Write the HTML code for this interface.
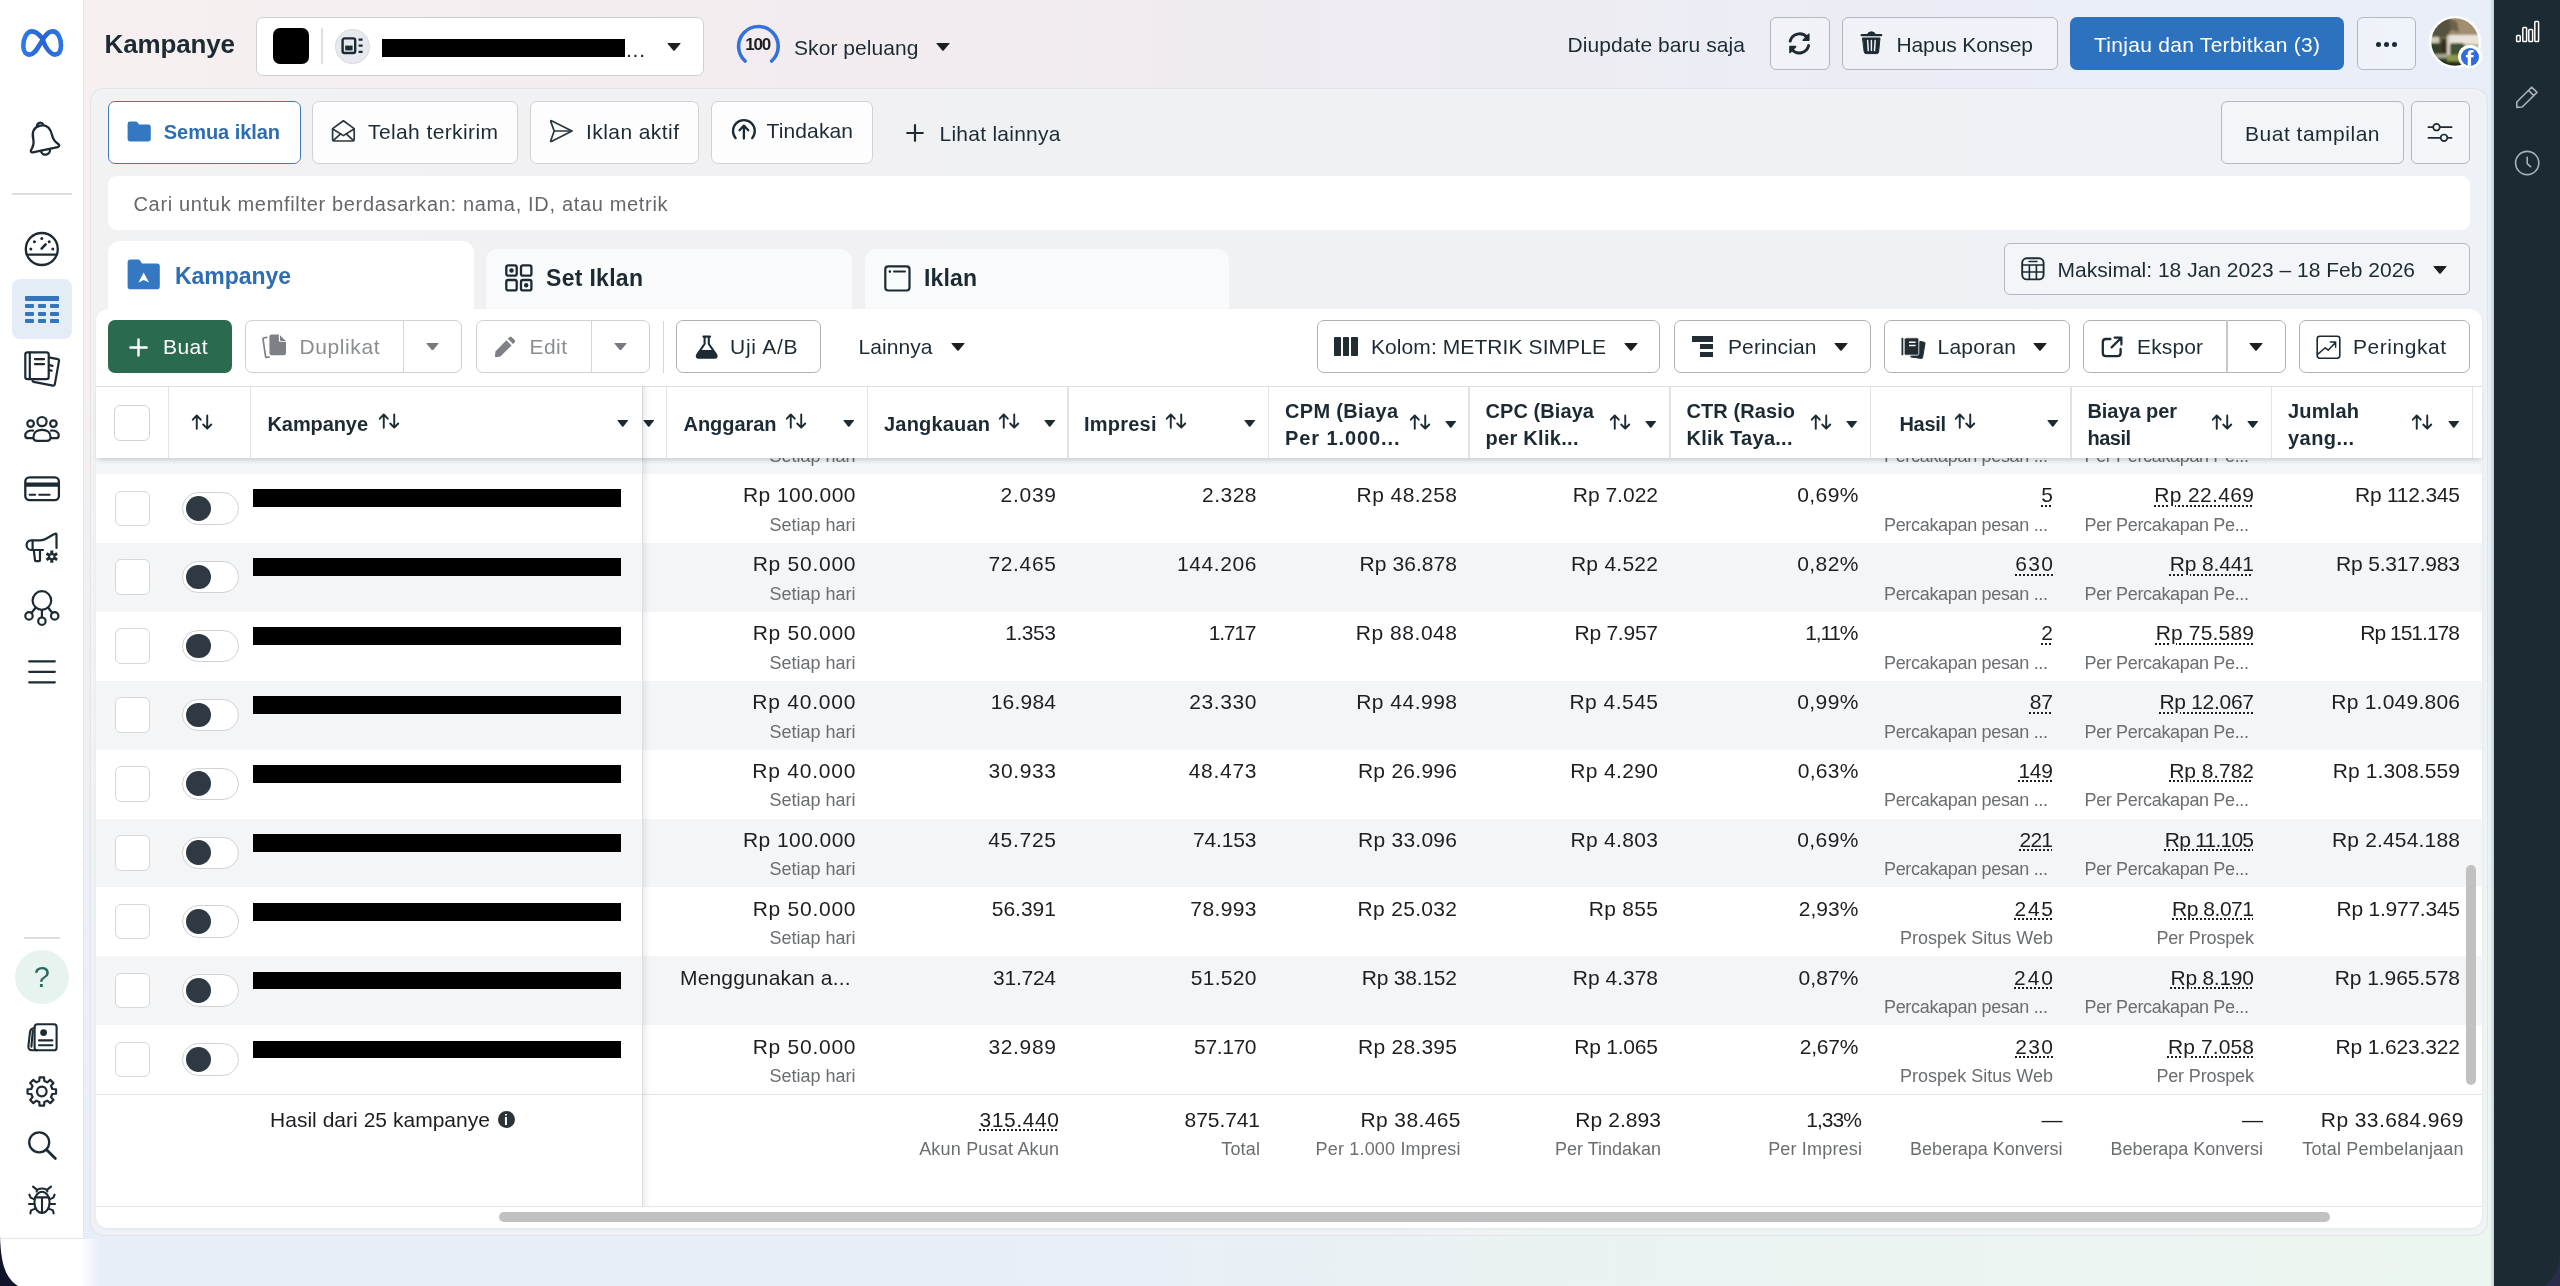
<!DOCTYPE html>
<html lang="id"><head><meta charset="utf-8"><title>Kampanye</title>
<style>
html,body{margin:0;padding:0;}
body{width:2560px;height:1286px;overflow:hidden;position:relative;font-family:"Liberation Sans",sans-serif;background:#eef1f6;}
.t{position:absolute;white-space:nowrap;}
div,svg,span{box-sizing:border-box;}
.btn{border:1.5px solid #b3b8c0;border-radius:6px;background:rgba(255,255,255,0.3);}
.btnt{border:1.5px solid #cfd2d7;border-radius:7px;background:rgba(255,255,255,0.82);}
.btnw{border:1.5px solid #cdd0d5;border-radius:7px;background:#fff;}
</style></head><body><div id="root" style="position:absolute;left:0;top:0;width:2560px;height:1286px;overflow:hidden;will-change:transform;">
<div style="position:absolute;left:0px;top:0px;width:2560px;height:1286px;background:linear-gradient(90deg,#f6f0f0 0%,#f3edf0 25%,#f0ebf1 48%,#ebedf5 72%,#e8eef8 100%);"></div>
<div style="position:absolute;left:0px;top:0px;width:2560px;height:1286px;background:linear-gradient(90deg,#e8eef8 0%,#e8eef8 38%,#eaf3f1 66%,#ecf6f0 100%);-webkit-mask-image:linear-gradient(180deg,rgba(0,0,0,0) 30%,#000 92%);mask-image:linear-gradient(180deg,rgba(0,0,0,0) 30%,#000 92%);"></div>
<div style="position:absolute;left:0px;top:0px;width:84px;height:1239px;background:#fff;border-right:1.5px solid #e3e5e9;border-bottom:1.5px solid #e3e5e9;"></div>
<div style="position:absolute;left:0px;top:1239px;width:100px;height:47px;background:linear-gradient(90deg,#fff 0%,#fff 80%,rgba(255,255,255,0) 100%);"></div>
<svg style="position:absolute;left:0px;top:1236px;" width="30" height="50" viewBox="0 0 30 50"><path d="M0 0 V50 H18 C6 42 1 30 0 0Z" fill="#12142b"/></svg>
<div style="position:absolute;left:12px;top:193px;width:60px;height:2px;background:#dadde1;"></div>
<div style="position:absolute;left:12px;top:279px;width:60px;height:60px;background:#e4ecf6;border-radius:8px;"></div>
<div style="position:absolute;left:24px;top:937px;width:36px;height:2px;background:#dadde1;"></div>
<div style="position:absolute;left:15px;top:950px;width:54px;height:54px;background:#e6f3ee;border-radius:50%;"></div>
<div style="position:absolute;left:2494px;top:0px;width:66px;height:1286px;background:#1c2b33;"></div>
<div style="position:absolute;left:2490px;top:0px;width:4px;height:1286px;background:linear-gradient(90deg,rgba(28,43,51,0),rgba(28,43,51,0.18));"></div>
<svg style="position:absolute;left:2540px;top:1254px;" width="20" height="32" viewBox="0 0 20 32"><path d="M20 0 V32 H3 C13 27 19 17 20 0Z" fill="#2a2d49"/></svg>
<span class="t" style="left:104.50px;top:27.29px;font-size:26px;line-height:34px;color:#1c2b33;font-weight:700;letter-spacing:-0.144px;">Kampanye</span>
<div class="btnw" style="position:absolute;left:255.5px;top:17px;width:448.0px;height:58.5px;"></div>
<div style="position:absolute;left:273px;top:28px;width:36px;height:36px;background:#000;border-radius:7px;"></div>
<div style="position:absolute;left:321px;top:28px;width:1.5px;height:36px;background:#dcdfe3;"></div>
<div style="position:absolute;left:335px;top:28.5px;width:35px;height:35.0px;background:#e6eaef;border-radius:50%;border:1px solid #d5dae0;"></div>
<div style="position:absolute;left:381.5px;top:38.5px;width:243.5px;height:18.5px;background:#000;"></div>
<span class="t" style="left:626.00px;top:36.22px;font-size:21px;line-height:27px;color:#1c1e21;letter-spacing:0.749px;">...</span>
<svg style="position:absolute;left:667.0px;top:42.5px;" width="14.0" height="8.0" viewBox="0 0 14 8"><path d="M0.6 0.8 Q0 0 1 0 H13 Q14 0 13.4 0.8 L7.7 7.5 Q7.0 8 6.3 7.5 Z" fill="#1c1e21"/></svg>
<svg style="position:absolute;left:735px;top:22px;" width="48" height="48" viewBox="0 0 48 48"><path d="M10.13 38.99 A19.8 19.8 0 1 1 36.67 38.99" fill="none" stroke="#3572d6" stroke-width="3.6" stroke-linecap="round"/></svg>
<span class="t" style="left:745.32px;top:33.91px;font-size:17px;line-height:22px;color:#1c1e21;font-weight:700;letter-spacing:-1.200px;">100</span>
<span class="t" style="left:794.00px;top:34.22px;font-size:21px;line-height:27px;color:#1c2b33;letter-spacing:0.067px;">Skor peluang</span>
<svg style="position:absolute;left:936.0px;top:42.5px;" width="14.0" height="8.0" viewBox="0 0 14 8"><path d="M0.6 0.8 Q0 0 1 0 H13 Q14 0 13.4 0.8 L7.7 7.5 Q7.0 8 6.3 7.5 Z" fill="#1c1e21"/></svg>
<span class="t" style="left:1567.50px;top:30.72px;font-size:21px;line-height:27px;color:#1c2b33;letter-spacing:0.071px;">Diupdate baru saja</span>
<div class="btn" style="position:absolute;left:1770px;top:16.5px;width:59.5px;height:53.5px;"></div>
<div class="btn" style="position:absolute;left:1841.5px;top:16.5px;width:216.0px;height:53.5px;"></div>
<span class="t" style="left:1896.50px;top:30.72px;font-size:21px;line-height:27px;color:#1c2b33;letter-spacing:-0.115px;">Hapus Konsep</span>
<div style="position:absolute;left:2070px;top:16.5px;width:274px;height:53.5px;background:#2d72be;border-radius:7px;"></div>
<span class="t" style="left:2094.00px;top:30.72px;font-size:21px;line-height:27px;color:#fff;letter-spacing:0.284px;">Tinjau dan Terbitkan (3)</span>
<div class="btn" style="position:absolute;left:2356.5px;top:16.5px;width:59.5px;height:53.5px;"></div>
<div style="position:absolute;left:2375.5px;top:41.5px;width:5.0px;height:5.0px;background:#1c2b33;border-radius:50%;"></div>
<div style="position:absolute;left:2383.5px;top:41.5px;width:5.0px;height:5.0px;background:#1c2b33;border-radius:50%;"></div>
<div style="position:absolute;left:2391.5px;top:41.5px;width:5.0px;height:5.0px;background:#1c2b33;border-radius:50%;"></div>
<div style="position:absolute;left:2429px;top:15.8px;width:52px;height:52.0px;border-radius:50%;background:rgba(255,255,255,0.95);box-shadow:0 0 2px rgba(255,255,255,0.9);"></div>
<svg style="position:absolute;left:2431px;top:18px" width="48" height="48" viewBox="-24 -24 48 48"><defs><clipPath id="avc"><circle r="23.7"/></clipPath><filter id="avb" x="-20%" y="-20%" width="140%" height="140%"><feGaussianBlur stdDeviation="1.1"/></filter></defs><g clip-path="url(#avc)"><g filter="url(#avb)"><rect x="-26" y="-26" width="52" height="52" fill="#6b6a4a"/><path d="M-14 -26 H26 V-6 H-10 Z" fill="#a08e6e"/><path d="M-26 -26 H-6 L-2 -14 L-8 -6 L-26 -2 Z" fill="#55533c"/><path d="M-6 -24 L2 -20 L4 -10 L-4 -12 Z" fill="#6d6048"/><rect x="-6" y="-7" width="32" height="9" fill="#e9e4da"/><rect x="-26" y="-5" width="10" height="6" fill="#cfcfb8"/><rect x="-26" y="1" width="18" height="26" fill="#36422b"/><rect x="-8" y="-6" width="3" height="19" fill="#d8d0c2"/><rect x="-13.5" y="-3" width="5" height="14" fill="#3b2a22"/><rect x="-5" y="2" width="31" height="24" fill="#4c5c33"/><rect x="-4" y="1" width="12" height="10" fill="#3f5236"/><rect x="10" y="2" width="16" height="8" fill="#b9b49a"/><rect x="-8" y="13" width="16" height="6" fill="#8a9a48"/><rect x="-20" y="12" width="12" height="4" fill="#a5a58c"/><path d="M-26 16 L-4 20 L14 21 L26 18 V26 H-26 Z" fill="#262c1c"/></g></g></svg>
<div style="position:absolute;left:2458.4px;top:45px;width:23.40000000000009px;height:23.400000000000006px;border-radius:50%;background:#fff;"></div>
<div style="position:absolute;left:2461px;top:47.6px;width:18.199999999999818px;height:18.199999999999996px;border-radius:50%;background:#2f6ae0;overflow:hidden;"><span class="t" style="left:4.6px;top:0.6px;font-size:24px;line-height:24px;font-weight:700;color:#fff;">f</span></div>
<div style="position:absolute;left:90px;top:88.2px;width:2397.5px;height:1148.3px;background:rgba(240,242,244,0.72);border:1.5px solid rgba(224,228,233,0.95);border-radius:14px;"></div>
<div style="position:absolute;left:107.5px;top:101px;width:193.0px;height:63px;background:#fff;border:1.8px solid #4279b8;border-radius:7px;"></div>
<span class="t" style="left:163.80px;top:119.07px;font-size:20px;line-height:26px;color:#2f6db3;font-weight:700;letter-spacing:-0.052px;">Semua iklan</span>
<div class="btnt" style="position:absolute;left:312px;top:101px;width:205.5px;height:63px;"></div>
<span class="t" style="left:368.00px;top:118.22px;font-size:21px;line-height:27px;color:#1c2b33;letter-spacing:0.395px;">Telah terkirim</span>
<div class="btnt" style="position:absolute;left:530px;top:101px;width:169px;height:63px;"></div>
<span class="t" style="left:586.00px;top:118.22px;font-size:21px;line-height:27px;color:#1c2b33;letter-spacing:0.429px;">Iklan aktif</span>
<div class="btnt" style="position:absolute;left:711px;top:101px;width:161.5px;height:63px;"></div>
<span class="t" style="left:766.50px;top:117.22px;font-size:21px;line-height:27px;color:#1c2b33;letter-spacing:0.127px;">Tindakan</span>
<span class="t" style="left:939.50px;top:119.72px;font-size:21px;line-height:27px;color:#1c2b33;letter-spacing:0.256px;">Lihat lainnya</span>
<div class="btn" style="position:absolute;left:2220.5px;top:101px;width:183.0px;height:63px;"></div>
<span class="t" style="left:2245.00px;top:119.72px;font-size:21px;line-height:27px;color:#1c2b33;letter-spacing:0.507px;">Buat tampilan</span>
<div class="btn" style="position:absolute;left:2410.5px;top:101px;width:59.0px;height:63px;"></div>
<div style="position:absolute;left:107.5px;top:176px;width:2362.5px;height:54px;background:#fff;border-radius:9px;"></div>
<span class="t" style="left:133.50px;top:190.57px;font-size:20px;line-height:26px;color:#65676b;letter-spacing:0.667px;">Cari untuk memfilter berdasarkan: nama, ID, atau metrik</span>
<div style="position:absolute;left:107.5px;top:241px;width:366.5px;height:79px;background:#fff;border-radius:12px 12px 0 0;"></div>
<div style="position:absolute;left:486px;top:249px;width:366px;height:71px;background:rgba(250,252,254,0.8);border-radius:12px 12px 0 0;"></div>
<div style="position:absolute;left:865px;top:249px;width:364px;height:71px;background:rgba(250,252,254,0.8);border-radius:12px 12px 0 0;"></div>
<span class="t" style="left:175.00px;top:260.53px;font-size:23px;line-height:30px;color:#2f6db3;font-weight:700;letter-spacing:-0.046px;">Kampanye</span>
<span class="t" style="left:546.00px;top:263.03px;font-size:23px;line-height:30px;color:#1c2b33;font-weight:700;letter-spacing:0.301px;">Set Iklan</span>
<span class="t" style="left:924.00px;top:263.03px;font-size:23px;line-height:30px;color:#1c2b33;font-weight:700;letter-spacing:0.147px;">Iklan</span>
<div class="btn" style="position:absolute;left:2003.5px;top:242.5px;width:466.0px;height:52.5px;"></div>
<span class="t" style="left:2057.50px;top:256.22px;font-size:21px;line-height:27px;color:#1c2b33;letter-spacing:0.008px;">Maksimal: 18 Jan 2023 – 18 Feb 2026</span>
<svg style="position:absolute;left:2433.0px;top:265.5px;" width="14.0" height="8.0" viewBox="0 0 14 8"><path d="M0.6 0.8 Q0 0 1 0 H13 Q14 0 13.4 0.8 L7.7 7.5 Q7.0 8 6.3 7.5 Z" fill="#1c1e21"/></svg>
<div style="position:absolute;left:96px;top:308.5px;width:2386px;height:919.0px;background:#fff;border-radius:12px;box-shadow:0 1px 3px rgba(0,0,0,0.06);"></div>
<div style="position:absolute;left:107.5px;top:300px;width:366.5px;height:12px;background:#fff;"></div>
<div style="position:absolute;left:108px;top:319.5px;width:124px;height:53.5px;background:#2a6a4f;border-radius:7px;"></div>
<span class="t" style="left:163.00px;top:333.22px;font-size:21px;line-height:27px;color:#fff;letter-spacing:0.433px;">Buat</span>
<div class="btnw" style="position:absolute;left:244.5px;top:320px;width:217.5px;height:53px;"></div>
<div style="position:absolute;left:402.5px;top:320px;width:1.5px;height:53px;background:#d3d6da;"></div>
<span class="t" style="left:299.50px;top:333.22px;font-size:21px;line-height:27px;color:#8a8d91;letter-spacing:0.590px;">Duplikat</span>
<svg style="position:absolute;left:426.0px;top:342.75px;" width="13.0" height="7.5" viewBox="0 0 13 7.5"><path d="M0.6 0.8 Q0 0 1 0 H12 Q13 0 12.4 0.8 L7.2 7.0 Q6.5 7.5 5.8 7.0 Z" fill="#76797d"/></svg>
<div class="btnw" style="position:absolute;left:475.5px;top:320px;width:174.0px;height:53px;"></div>
<div style="position:absolute;left:590.5px;top:320px;width:1.5px;height:53px;background:#d3d6da;"></div>
<span class="t" style="left:529.50px;top:333.22px;font-size:21px;line-height:27px;color:#8a8d91;letter-spacing:0.438px;">Edit</span>
<svg style="position:absolute;left:614.0px;top:342.75px;" width="13.0" height="7.5" viewBox="0 0 13 7.5"><path d="M0.6 0.8 Q0 0 1 0 H12 Q13 0 12.4 0.8 L7.2 7.0 Q6.5 7.5 5.8 7.0 Z" fill="#76797d"/></svg>
<div style="position:absolute;left:662.5px;top:320.5px;width:1.5px;height:52.5px;background:#d3d6da;"></div>
<div class="btnw" style="position:absolute;left:676px;top:320px;width:145px;height:53px;border-color:#adb1b7;"></div>
<span class="t" style="left:730.00px;top:333.22px;font-size:21px;line-height:27px;color:#1c2b33;letter-spacing:0.746px;">Uji A/B</span>
<span class="t" style="left:858.50px;top:333.22px;font-size:21px;line-height:27px;color:#1c2b33;letter-spacing:0.073px;">Lainnya</span>
<svg style="position:absolute;left:950.5px;top:342.5px;" width="14.0" height="8.0" viewBox="0 0 14 8"><path d="M0.6 0.8 Q0 0 1 0 H13 Q14 0 13.4 0.8 L7.7 7.5 Q7.0 8 6.3 7.5 Z" fill="#1c1e21"/></svg>
<div class="btnw" style="position:absolute;left:1316.5px;top:320px;width:343.5px;height:53px;border-color:#adb1b7;"></div>
<span class="t" style="left:1371.00px;top:333.22px;font-size:21px;line-height:27px;color:#1c2b33;letter-spacing:0.084px;">Kolom: METRIK SIMPLE</span>
<svg style="position:absolute;left:1624.0px;top:342.5px;" width="14.0" height="8.0" viewBox="0 0 14 8"><path d="M0.6 0.8 Q0 0 1 0 H13 Q14 0 13.4 0.8 L7.7 7.5 Q7.0 8 6.3 7.5 Z" fill="#1c1e21"/></svg>
<div class="btnw" style="position:absolute;left:1673.5px;top:320px;width:197.0px;height:53px;border-color:#adb1b7;"></div>
<span class="t" style="left:1728.00px;top:333.22px;font-size:21px;line-height:27px;color:#1c2b33;letter-spacing:0.118px;">Perincian</span>
<svg style="position:absolute;left:1834.0px;top:342.5px;" width="14.0" height="8.0" viewBox="0 0 14 8"><path d="M0.6 0.8 Q0 0 1 0 H13 Q14 0 13.4 0.8 L7.7 7.5 Q7.0 8 6.3 7.5 Z" fill="#1c1e21"/></svg>
<div class="btnw" style="position:absolute;left:1883.5px;top:320px;width:186.5px;height:53px;border-color:#adb1b7;"></div>
<span class="t" style="left:1937.50px;top:333.22px;font-size:21px;line-height:27px;color:#1c2b33;letter-spacing:0.238px;">Laporan</span>
<svg style="position:absolute;left:2033.0px;top:342.5px;" width="14.0" height="8.0" viewBox="0 0 14 8"><path d="M0.6 0.8 Q0 0 1 0 H13 Q14 0 13.4 0.8 L7.7 7.5 Q7.0 8 6.3 7.5 Z" fill="#1c1e21"/></svg>
<div class="btnw" style="position:absolute;left:2083px;top:320px;width:202.5px;height:53px;border-color:#adb1b7;"></div>
<div style="position:absolute;left:2226px;top:320px;width:1.5px;height:53px;background:#c4c8cd;"></div>
<span class="t" style="left:2137.00px;top:333.22px;font-size:21px;line-height:27px;color:#1c2b33;letter-spacing:0.128px;">Ekspor</span>
<svg style="position:absolute;left:2249.0px;top:342.5px;" width="14.0" height="8.0" viewBox="0 0 14 8"><path d="M0.6 0.8 Q0 0 1 0 H13 Q14 0 13.4 0.8 L7.7 7.5 Q7.0 8 6.3 7.5 Z" fill="#1c1e21"/></svg>
<div class="btnw" style="position:absolute;left:2298.5px;top:320px;width:171.0px;height:53px;border-color:#adb1b7;"></div>
<span class="t" style="left:2353.00px;top:333.22px;font-size:21px;line-height:27px;color:#1c2b33;letter-spacing:0.535px;">Peringkat</span>
<div style="position:absolute;left:96px;top:405.1px;width:2386px;height:68.89999999999998px;background:#f4f5f7;"></div>
<span class="t" style="left:769.44px;top:444.76px;font-size:18px;line-height:23px;color:#6a6d72;">Setiap hari</span>
<span class="t" style="left:1884.00px;top:444.76px;font-size:18px;line-height:23px;color:#6a6d72;letter-spacing:-0.322px;">Percakapan pesan ...</span>
<span class="t" style="left:2084.50px;top:444.76px;font-size:18px;line-height:23px;color:#6a6d72;letter-spacing:-0.348px;">Per Percakapan Pe...</span>
<div style="position:absolute;left:114.5px;top:490.5px;width:35.5px;height:35.5px;background:#fff;border:1.5px solid #d4d7dc;border-radius:6px;"></div>
<div style="position:absolute;left:182px;top:492.0px;width:56.5px;height:32.5px;background:#fff;border:1.5px solid #cfd3d8;border-radius:17px;"></div>
<div style="position:absolute;left:186px;top:495.8px;width:24.80000000000001px;height:24.80000000000001px;background:#2e3944;border-radius:50%;"></div>
<div style="position:absolute;left:253px;top:489.3px;width:367.5px;height:17.899999999999977px;background:#000;"></div>
<span class="t" style="left:743.01px;top:481.32px;font-size:21px;line-height:27px;color:#1c1e21;letter-spacing:0.433px;">Rp 100.000</span>
<span class="t" style="left:1000.61px;top:481.32px;font-size:21px;line-height:27px;color:#1c1e21;letter-spacing:0.709px;">2.039</span>
<span class="t" style="left:1201.96px;top:481.32px;font-size:21px;line-height:27px;color:#1c1e21;letter-spacing:0.497px;">2.328</span>
<span class="t" style="left:1356.61px;top:481.32px;font-size:21px;line-height:27px;color:#1c1e21;letter-spacing:0.435px;">Rp 48.258</span>
<span class="t" style="left:1572.77px;top:481.32px;font-size:21px;line-height:27px;color:#1c1e21;">Rp 7.022</span>
<span class="t" style="left:1797.16px;top:481.32px;font-size:21px;line-height:27px;color:#1c1e21;letter-spacing:0.449px;">0,69%</span>
<span class="t" style="left:2041.32px;top:481.32px;font-size:21px;line-height:27px;color:#1c1e21;text-decoration:underline dotted;text-decoration-thickness:2px;text-underline-offset:3px;">5</span>
<span class="t" style="left:2154.34px;top:481.32px;font-size:21px;line-height:27px;color:#1c1e21;letter-spacing:0.343px;text-decoration:underline dotted;text-decoration-thickness:2px;text-underline-offset:3px;">Rp 22.469</span>
<span class="t" style="left:2354.96px;top:481.32px;font-size:21px;line-height:27px;color:#1c1e21;letter-spacing:-0.221px;">Rp 112.345</span>
<span class="t" style="left:769.44px;top:513.86px;font-size:18px;line-height:23px;color:#6a6d72;">Setiap hari</span>
<span class="t" style="left:1884.00px;top:513.86px;font-size:18px;line-height:23px;color:#6a6d72;letter-spacing:-0.322px;">Percakapan pesan ...</span>
<span class="t" style="left:2084.50px;top:513.86px;font-size:18px;line-height:23px;color:#6a6d72;letter-spacing:-0.348px;">Per Percakapan Pe...</span>
<div style="position:absolute;left:96px;top:542.9px;width:2386px;height:68.89999999999998px;background:#f4f5f7;"></div>
<div style="position:absolute;left:114.5px;top:559.4px;width:35.5px;height:35.5px;background:#fff;border:1.5px solid #d4d7dc;border-radius:6px;"></div>
<div style="position:absolute;left:182px;top:560.9px;width:56.5px;height:32.5px;background:#fff;border:1.5px solid #cfd3d8;border-radius:17px;"></div>
<div style="position:absolute;left:186px;top:564.6999999999999px;width:24.80000000000001px;height:24.800000000000068px;background:#2e3944;border-radius:50%;"></div>
<div style="position:absolute;left:253px;top:558.1999999999999px;width:367.5px;height:17.90000000000009px;background:#000;"></div>
<span class="t" style="left:752.67px;top:550.22px;font-size:21px;line-height:27px;color:#1c1e21;letter-spacing:0.740px;">Rp 50.000</span>
<span class="t" style="left:988.45px;top:550.22px;font-size:21px;line-height:27px;color:#1c1e21;letter-spacing:0.664px;">72.465</span>
<span class="t" style="left:1176.93px;top:550.22px;font-size:21px;line-height:27px;color:#1c1e21;letter-spacing:0.610px;">144.206</span>
<span class="t" style="left:1359.59px;top:550.22px;font-size:21px;line-height:27px;color:#1c1e21;letter-spacing:0.062px;">Rp 36.878</span>
<span class="t" style="left:1570.92px;top:550.22px;font-size:21px;line-height:27px;color:#1c1e21;letter-spacing:0.264px;">Rp 4.522</span>
<span class="t" style="left:1797.22px;top:550.22px;font-size:21px;line-height:27px;color:#1c1e21;letter-spacing:0.434px;">0,82%</span>
<span class="t" style="left:2015.13px;top:550.22px;font-size:21px;line-height:27px;color:#1c1e21;letter-spacing:1.415px;text-decoration:underline dotted;text-decoration-thickness:2px;text-underline-offset:3px;">630</span>
<span class="t" style="left:2169.71px;top:550.22px;font-size:21px;line-height:27px;color:#1c1e21;letter-spacing:-0.135px;text-decoration:underline dotted;text-decoration-thickness:2px;text-underline-offset:3px;">Rp 8.441</span>
<span class="t" style="left:2336.07px;top:550.22px;font-size:21px;line-height:27px;color:#1c1e21;letter-spacing:-0.198px;">Rp 5.317.983</span>
<span class="t" style="left:769.44px;top:582.76px;font-size:18px;line-height:23px;color:#6a6d72;">Setiap hari</span>
<span class="t" style="left:1884.00px;top:582.76px;font-size:18px;line-height:23px;color:#6a6d72;letter-spacing:-0.322px;">Percakapan pesan ...</span>
<span class="t" style="left:2084.50px;top:582.76px;font-size:18px;line-height:23px;color:#6a6d72;letter-spacing:-0.348px;">Per Percakapan Pe...</span>
<div style="position:absolute;left:114.5px;top:628.3px;width:35.5px;height:35.5px;background:#fff;border:1.5px solid #d4d7dc;border-radius:6px;"></div>
<div style="position:absolute;left:182px;top:629.8px;width:56.5px;height:32.5px;background:#fff;border:1.5px solid #cfd3d8;border-radius:17px;"></div>
<div style="position:absolute;left:186px;top:633.5999999999999px;width:24.80000000000001px;height:24.800000000000068px;background:#2e3944;border-radius:50%;"></div>
<div style="position:absolute;left:253px;top:627.0999999999999px;width:367.5px;height:17.90000000000009px;background:#000;"></div>
<span class="t" style="left:752.67px;top:619.12px;font-size:21px;line-height:27px;color:#1c1e21;letter-spacing:0.740px;">Rp 50.000</span>
<span class="t" style="left:1005.17px;top:619.12px;font-size:21px;line-height:27px;color:#1c1e21;letter-spacing:-0.431px;">1.353</span>
<span class="t" style="left:1208.75px;top:619.12px;font-size:21px;line-height:27px;color:#1c1e21;letter-spacing:-1.200px;">1.717</span>
<span class="t" style="left:1355.80px;top:619.12px;font-size:21px;line-height:27px;color:#1c1e21;letter-spacing:0.536px;">Rp 88.048</span>
<span class="t" style="left:1574.53px;top:619.12px;font-size:21px;line-height:27px;color:#1c1e21;letter-spacing:-0.252px;">Rp 7.957</span>
<span class="t" style="left:1805.31px;top:619.12px;font-size:21px;line-height:27px;color:#1c1e21;letter-spacing:-1.200px;">1,11%</span>
<span class="t" style="left:2041.32px;top:619.12px;font-size:21px;line-height:27px;color:#1c1e21;text-decoration:underline dotted;text-decoration-thickness:2px;text-underline-offset:3px;">2</span>
<span class="t" style="left:2155.63px;top:619.12px;font-size:21px;line-height:27px;color:#1c1e21;letter-spacing:0.182px;text-decoration:underline dotted;text-decoration-thickness:2px;text-underline-offset:3px;">Rp 75.589</span>
<span class="t" style="left:2360.24px;top:619.12px;font-size:21px;line-height:27px;color:#1c1e21;letter-spacing:-0.981px;">Rp 151.178</span>
<span class="t" style="left:769.44px;top:651.66px;font-size:18px;line-height:23px;color:#6a6d72;">Setiap hari</span>
<span class="t" style="left:1884.00px;top:651.66px;font-size:18px;line-height:23px;color:#6a6d72;letter-spacing:-0.322px;">Percakapan pesan ...</span>
<span class="t" style="left:2084.50px;top:651.66px;font-size:18px;line-height:23px;color:#6a6d72;letter-spacing:-0.348px;">Per Percakapan Pe...</span>
<div style="position:absolute;left:96px;top:680.7px;width:2386px;height:68.89999999999998px;background:#f4f5f7;"></div>
<div style="position:absolute;left:114.5px;top:697.2px;width:35.5px;height:35.5px;background:#fff;border:1.5px solid #d4d7dc;border-radius:6px;"></div>
<div style="position:absolute;left:182px;top:698.7px;width:56.5px;height:32.5px;background:#fff;border:1.5px solid #cfd3d8;border-radius:17px;"></div>
<div style="position:absolute;left:186px;top:702.5px;width:24.80000000000001px;height:24.800000000000068px;background:#2e3944;border-radius:50%;"></div>
<div style="position:absolute;left:253px;top:696.0px;width:367.5px;height:17.90000000000009px;background:#000;"></div>
<span class="t" style="left:752.20px;top:688.02px;font-size:21px;line-height:27px;color:#1c1e21;letter-spacing:0.798px;">Rp 40.000</span>
<span class="t" style="left:990.65px;top:688.02px;font-size:21px;line-height:27px;color:#1c1e21;letter-spacing:0.224px;">16.984</span>
<span class="t" style="left:1189.23px;top:688.02px;font-size:21px;line-height:27px;color:#1c1e21;letter-spacing:0.608px;">23.330</span>
<span class="t" style="left:1356.14px;top:688.02px;font-size:21px;line-height:27px;color:#1c1e21;letter-spacing:0.493px;">Rp 44.998</span>
<span class="t" style="left:1569.47px;top:688.02px;font-size:21px;line-height:27px;color:#1c1e21;letter-spacing:0.471px;">Rp 4.545</span>
<span class="t" style="left:1797.22px;top:688.02px;font-size:21px;line-height:27px;color:#1c1e21;letter-spacing:0.434px;">0,99%</span>
<span class="t" style="left:2029.81px;top:688.02px;font-size:21px;line-height:27px;color:#1c1e21;letter-spacing:-0.169px;text-decoration:underline dotted;text-decoration-thickness:2px;text-underline-offset:3px;">87</span>
<span class="t" style="left:2159.41px;top:688.02px;font-size:21px;line-height:27px;color:#1c1e21;letter-spacing:-0.290px;text-decoration:underline dotted;text-decoration-thickness:2px;text-underline-offset:3px;">Rp 12.067</span>
<span class="t" style="left:2331.31px;top:688.02px;font-size:21px;line-height:27px;color:#1c1e21;letter-spacing:0.235px;">Rp 1.049.806</span>
<span class="t" style="left:769.44px;top:720.56px;font-size:18px;line-height:23px;color:#6a6d72;">Setiap hari</span>
<span class="t" style="left:1884.00px;top:720.56px;font-size:18px;line-height:23px;color:#6a6d72;letter-spacing:-0.322px;">Percakapan pesan ...</span>
<span class="t" style="left:2084.50px;top:720.56px;font-size:18px;line-height:23px;color:#6a6d72;letter-spacing:-0.348px;">Per Percakapan Pe...</span>
<div style="position:absolute;left:114.5px;top:766.1px;width:35.5px;height:35.5px;background:#fff;border:1.5px solid #d4d7dc;border-radius:6px;"></div>
<div style="position:absolute;left:182px;top:767.6px;width:56.5px;height:32.5px;background:#fff;border:1.5px solid #cfd3d8;border-radius:17px;"></div>
<div style="position:absolute;left:186px;top:771.4px;width:24.80000000000001px;height:24.800000000000068px;background:#2e3944;border-radius:50%;"></div>
<div style="position:absolute;left:253px;top:764.9px;width:367.5px;height:17.90000000000009px;background:#000;"></div>
<span class="t" style="left:752.20px;top:756.92px;font-size:21px;line-height:27px;color:#1c1e21;letter-spacing:0.798px;">Rp 40.000</span>
<span class="t" style="left:988.58px;top:756.92px;font-size:21px;line-height:27px;color:#1c1e21;letter-spacing:0.638px;">30.933</span>
<span class="t" style="left:1188.73px;top:756.92px;font-size:21px;line-height:27px;color:#1c1e21;letter-spacing:0.708px;">48.473</span>
<span class="t" style="left:1357.94px;top:756.92px;font-size:21px;line-height:27px;color:#1c1e21;letter-spacing:0.268px;">Rp 26.996</span>
<span class="t" style="left:1570.26px;top:756.92px;font-size:21px;line-height:27px;color:#1c1e21;letter-spacing:0.358px;">Rp 4.290</span>
<span class="t" style="left:1797.65px;top:756.92px;font-size:21px;line-height:27px;color:#1c1e21;letter-spacing:0.326px;">0,63%</span>
<span class="t" style="left:2018.45px;top:756.92px;font-size:21px;line-height:27px;color:#1c1e21;letter-spacing:-0.245px;text-decoration:underline dotted;text-decoration-thickness:2px;text-underline-offset:3px;">149</span>
<span class="t" style="left:2169.17px;top:756.92px;font-size:21px;line-height:27px;color:#1c1e21;letter-spacing:-0.057px;text-decoration:underline dotted;text-decoration-thickness:2px;text-underline-offset:3px;">Rp 8.782</span>
<span class="t" style="left:2332.84px;top:756.92px;font-size:21px;line-height:27px;color:#1c1e21;letter-spacing:0.096px;">Rp 1.308.559</span>
<span class="t" style="left:769.44px;top:789.46px;font-size:18px;line-height:23px;color:#6a6d72;">Setiap hari</span>
<span class="t" style="left:1884.00px;top:789.46px;font-size:18px;line-height:23px;color:#6a6d72;letter-spacing:-0.322px;">Percakapan pesan ...</span>
<span class="t" style="left:2084.50px;top:789.46px;font-size:18px;line-height:23px;color:#6a6d72;letter-spacing:-0.348px;">Per Percakapan Pe...</span>
<div style="position:absolute;left:96px;top:818.5px;width:2386px;height:68.89999999999998px;background:#f4f5f7;"></div>
<div style="position:absolute;left:114.5px;top:835.0px;width:35.5px;height:35.5px;background:#fff;border:1.5px solid #d4d7dc;border-radius:6px;"></div>
<div style="position:absolute;left:182px;top:836.5px;width:56.5px;height:32.5px;background:#fff;border:1.5px solid #cfd3d8;border-radius:17px;"></div>
<div style="position:absolute;left:186px;top:840.3px;width:24.80000000000001px;height:24.800000000000068px;background:#2e3944;border-radius:50%;"></div>
<div style="position:absolute;left:253px;top:833.8px;width:367.5px;height:17.90000000000009px;background:#000;"></div>
<span class="t" style="left:743.01px;top:825.82px;font-size:21px;line-height:27px;color:#1c1e21;letter-spacing:0.433px;">Rp 100.000</span>
<span class="t" style="left:988.17px;top:825.82px;font-size:21px;line-height:27px;color:#1c1e21;letter-spacing:0.720px;">45.725</span>
<span class="t" style="left:1193.06px;top:825.82px;font-size:21px;line-height:27px;color:#1c1e21;letter-spacing:-0.158px;">74.153</span>
<span class="t" style="left:1357.98px;top:825.82px;font-size:21px;line-height:27px;color:#1c1e21;letter-spacing:0.263px;">Rp 33.096</span>
<span class="t" style="left:1570.45px;top:825.82px;font-size:21px;line-height:27px;color:#1c1e21;letter-spacing:0.331px;">Rp 4.803</span>
<span class="t" style="left:1797.16px;top:825.82px;font-size:21px;line-height:27px;color:#1c1e21;letter-spacing:0.449px;">0,69%</span>
<span class="t" style="left:2019.56px;top:825.82px;font-size:21px;line-height:27px;color:#1c1e21;letter-spacing:-0.800px;text-decoration:underline dotted;text-decoration-thickness:2px;text-underline-offset:3px;">221</span>
<span class="t" style="left:2164.85px;top:825.82px;font-size:21px;line-height:27px;color:#1c1e21;letter-spacing:-0.775px;text-decoration:underline dotted;text-decoration-thickness:2px;text-underline-offset:3px;">Rp 11.105</span>
<span class="t" style="left:2331.92px;top:825.82px;font-size:21px;line-height:27px;color:#1c1e21;letter-spacing:0.180px;">Rp 2.454.188</span>
<span class="t" style="left:769.44px;top:858.36px;font-size:18px;line-height:23px;color:#6a6d72;">Setiap hari</span>
<span class="t" style="left:1884.00px;top:858.36px;font-size:18px;line-height:23px;color:#6a6d72;letter-spacing:-0.322px;">Percakapan pesan ...</span>
<span class="t" style="left:2084.50px;top:858.36px;font-size:18px;line-height:23px;color:#6a6d72;letter-spacing:-0.348px;">Per Percakapan Pe...</span>
<div style="position:absolute;left:114.5px;top:903.9000000000001px;width:35.5px;height:35.5px;background:#fff;border:1.5px solid #d4d7dc;border-radius:6px;"></div>
<div style="position:absolute;left:182px;top:905.4000000000001px;width:56.5px;height:32.5px;background:#fff;border:1.5px solid #cfd3d8;border-radius:17px;"></div>
<div style="position:absolute;left:186px;top:909.2px;width:24.80000000000001px;height:24.800000000000068px;background:#2e3944;border-radius:50%;"></div>
<div style="position:absolute;left:253px;top:902.7px;width:367.5px;height:17.90000000000009px;background:#000;"></div>
<span class="t" style="left:752.67px;top:894.72px;font-size:21px;line-height:27px;color:#1c1e21;letter-spacing:0.740px;">Rp 50.000</span>
<span class="t" style="left:991.76px;top:894.72px;font-size:21px;line-height:27px;color:#1c1e21;">56.391</span>
<span class="t" style="left:1190.35px;top:894.72px;font-size:21px;line-height:27px;color:#1c1e21;letter-spacing:0.384px;">78.993</span>
<span class="t" style="left:1357.51px;top:894.72px;font-size:21px;line-height:27px;color:#1c1e21;letter-spacing:0.322px;">Rp 25.032</span>
<span class="t" style="left:1588.67px;top:894.72px;font-size:21px;line-height:27px;color:#1c1e21;letter-spacing:0.322px;">Rp 855</span>
<span class="t" style="left:1798.71px;top:894.72px;font-size:21px;line-height:27px;color:#1c1e21;letter-spacing:0.061px;">2,93%</span>
<span class="t" style="left:2014.55px;top:894.72px;font-size:21px;line-height:27px;color:#1c1e21;letter-spacing:1.705px;text-decoration:underline dotted;text-decoration-thickness:2px;text-underline-offset:3px;">245</span>
<span class="t" style="left:2172.03px;top:894.72px;font-size:21px;line-height:27px;color:#1c1e21;letter-spacing:-0.466px;text-decoration:underline dotted;text-decoration-thickness:2px;text-underline-offset:3px;">Rp 8.071</span>
<span class="t" style="left:2336.47px;top:894.72px;font-size:21px;line-height:27px;color:#1c1e21;letter-spacing:-0.234px;">Rp 1.977.345</span>
<span class="t" style="left:769.44px;top:927.26px;font-size:18px;line-height:23px;color:#6a6d72;">Setiap hari</span>
<span class="t" style="left:1900.00px;top:927.26px;font-size:18px;line-height:23px;color:#6a6d72;letter-spacing:0.016px;">Prospek Situs Web</span>
<span class="t" style="left:2156.40px;top:927.26px;font-size:18px;line-height:23px;color:#6a6d72;letter-spacing:-0.145px;">Per Prospek</span>
<div style="position:absolute;left:96px;top:956.3000000000001px;width:2386px;height:68.89999999999998px;background:#f4f5f7;"></div>
<div style="position:absolute;left:114.5px;top:972.8000000000001px;width:35.5px;height:35.5px;background:#fff;border:1.5px solid #d4d7dc;border-radius:6px;"></div>
<div style="position:absolute;left:182px;top:974.3000000000001px;width:56.5px;height:32.5px;background:#fff;border:1.5px solid #cfd3d8;border-radius:17px;"></div>
<div style="position:absolute;left:186px;top:978.1px;width:24.80000000000001px;height:24.800000000000068px;background:#2e3944;border-radius:50%;"></div>
<div style="position:absolute;left:253px;top:971.6px;width:367.5px;height:17.90000000000009px;background:#000;"></div>
<span class="t" style="left:680.00px;top:963.62px;font-size:21px;line-height:27px;color:#1c1e21;letter-spacing:0.158px;">Menggunakan a...</span>
<span class="t" style="left:993.05px;top:963.62px;font-size:21px;line-height:27px;color:#1c1e21;letter-spacing:-0.256px;">31.724</span>
<span class="t" style="left:1190.79px;top:963.62px;font-size:21px;line-height:27px;color:#1c1e21;letter-spacing:0.296px;">51.520</span>
<span class="t" style="left:1361.77px;top:963.62px;font-size:21px;line-height:27px;color:#1c1e21;letter-spacing:-0.210px;">Rp 38.152</span>
<span class="t" style="left:1572.85px;top:963.62px;font-size:21px;line-height:27px;color:#1c1e21;letter-spacing:-0.012px;">Rp 4.378</span>
<span class="t" style="left:1798.62px;top:963.62px;font-size:21px;line-height:27px;color:#1c1e21;letter-spacing:0.084px;">0,87%</span>
<span class="t" style="left:2014.04px;top:963.62px;font-size:21px;line-height:27px;color:#1c1e21;letter-spacing:1.960px;text-decoration:underline dotted;text-decoration-thickness:2px;text-underline-offset:3px;">240</span>
<span class="t" style="left:2170.48px;top:963.62px;font-size:21px;line-height:27px;color:#1c1e21;letter-spacing:-0.245px;text-decoration:underline dotted;text-decoration-thickness:2px;text-underline-offset:3px;">Rp 8.190</span>
<span class="t" style="left:2334.69px;top:963.62px;font-size:21px;line-height:27px;color:#1c1e21;letter-spacing:-0.072px;">Rp 1.965.578</span>
<span class="t" style="left:1884.00px;top:996.16px;font-size:18px;line-height:23px;color:#6a6d72;letter-spacing:-0.322px;">Percakapan pesan ...</span>
<span class="t" style="left:2084.50px;top:996.16px;font-size:18px;line-height:23px;color:#6a6d72;letter-spacing:-0.348px;">Per Percakapan Pe...</span>
<div style="position:absolute;left:114.5px;top:1041.7px;width:35.5px;height:35.5px;background:#fff;border:1.5px solid #d4d7dc;border-radius:6px;"></div>
<div style="position:absolute;left:182px;top:1043.2px;width:56.5px;height:32.5px;background:#fff;border:1.5px solid #cfd3d8;border-radius:17px;"></div>
<div style="position:absolute;left:186px;top:1047.0px;width:24.80000000000001px;height:24.799999999999955px;background:#2e3944;border-radius:50%;"></div>
<div style="position:absolute;left:253px;top:1040.5px;width:367.5px;height:17.90000000000009px;background:#000;"></div>
<span class="t" style="left:752.67px;top:1032.52px;font-size:21px;line-height:27px;color:#1c1e21;letter-spacing:0.740px;">Rp 50.000</span>
<span class="t" style="left:988.45px;top:1032.52px;font-size:21px;line-height:27px;color:#1c1e21;letter-spacing:0.664px;">32.989</span>
<span class="t" style="left:1194.08px;top:1032.52px;font-size:21px;line-height:27px;color:#1c1e21;letter-spacing:-0.362px;">57.170</span>
<span class="t" style="left:1358.06px;top:1032.52px;font-size:21px;line-height:27px;color:#1c1e21;letter-spacing:0.253px;">Rp 28.395</span>
<span class="t" style="left:1574.23px;top:1032.52px;font-size:21px;line-height:27px;color:#1c1e21;letter-spacing:-0.209px;">Rp 1.065</span>
<span class="t" style="left:1799.71px;top:1032.52px;font-size:21px;line-height:27px;color:#1c1e21;letter-spacing:-0.189px;">2,67%</span>
<span class="t" style="left:2015.34px;top:1032.52px;font-size:21px;line-height:27px;color:#1c1e21;letter-spacing:1.310px;text-decoration:underline dotted;text-decoration-thickness:2px;text-underline-offset:3px;">230</span>
<span class="t" style="left:2167.98px;top:1032.52px;font-size:21px;line-height:27px;color:#1c1e21;letter-spacing:0.113px;text-decoration:underline dotted;text-decoration-thickness:2px;text-underline-offset:3px;">Rp 7.058</span>
<span class="t" style="left:2335.40px;top:1032.52px;font-size:21px;line-height:27px;color:#1c1e21;letter-spacing:-0.137px;">Rp 1.623.322</span>
<span class="t" style="left:769.44px;top:1065.06px;font-size:18px;line-height:23px;color:#6a6d72;">Setiap hari</span>
<span class="t" style="left:1900.00px;top:1065.06px;font-size:18px;line-height:23px;color:#6a6d72;letter-spacing:0.016px;">Prospek Situs Web</span>
<span class="t" style="left:2156.40px;top:1065.06px;font-size:18px;line-height:23px;color:#6a6d72;letter-spacing:-0.145px;">Per Prospek</span>
<div style="position:absolute;left:641.5px;top:386px;width:1.5px;height:820px;background:#dcdfe3;"></div>
<div style="position:absolute;left:643px;top:386px;width:7px;height:820px;background:linear-gradient(90deg,rgba(0,0,0,0.07),rgba(0,0,0,0));"></div>
<div style="position:absolute;left:2466px;top:865px;width:10px;height:219.5px;background:#c1c1c1;border-radius:5px;"></div>
<div style="position:absolute;left:96px;top:1094px;width:2386px;height:112.5px;background:#fff;border-top:1.5px solid #e1e4e8;border-bottom:1.5px solid #e1e4e8;"></div>
<div style="position:absolute;left:641.5px;top:1094px;width:1.5px;height:112px;background:#dcdfe3;"></div>
<div style="position:absolute;left:643px;top:1094px;width:7px;height:112px;background:linear-gradient(90deg,rgba(0,0,0,0.07),rgba(0,0,0,0));"></div>
<span class="t" style="left:270.00px;top:1105.72px;font-size:21px;line-height:27px;color:#1c1e21;letter-spacing:0.026px;">Hasil dari 25 kampanye</span>
<span class="t" style="left:979.49px;top:1105.72px;font-size:21px;line-height:27px;color:#1c1e21;letter-spacing:0.600px;text-decoration:underline dotted;text-decoration-thickness:2px;text-underline-offset:3px;">315.440</span>
<span class="t" style="left:919.16px;top:1138.26px;font-size:18px;line-height:23px;color:#6a6d72;letter-spacing:0.196px;">Akun Pusat Akun</span>
<span class="t" style="left:1184.61px;top:1105.72px;font-size:21px;line-height:27px;color:#1c1e21;letter-spacing:-0.087px;">875.741</span>
<span class="t" style="left:1221.21px;top:1138.26px;font-size:18px;line-height:23px;color:#6a6d72;letter-spacing:0.190px;">Total</span>
<span class="t" style="left:1360.54px;top:1105.72px;font-size:21px;line-height:27px;color:#1c1e21;letter-spacing:0.381px;">Rp 38.465</span>
<span class="t" style="left:1315.58px;top:1138.26px;font-size:18px;line-height:23px;color:#6a6d72;letter-spacing:0.178px;">Per 1.000 Impresi</span>
<span class="t" style="left:1575.26px;top:1105.72px;font-size:21px;line-height:27px;color:#1c1e21;letter-spacing:0.073px;">Rp 2.893</span>
<span class="t" style="left:1555.00px;top:1138.26px;font-size:18px;line-height:23px;color:#6a6d72;letter-spacing:-0.007px;">Per Tindakan</span>
<span class="t" style="left:1806.26px;top:1105.72px;font-size:21px;line-height:27px;color:#1c1e21;letter-spacing:-0.951px;">1,33%</span>
<span class="t" style="left:1768.13px;top:1138.26px;font-size:18px;line-height:23px;color:#6a6d72;letter-spacing:0.184px;">Per Impresi</span>
<span class="t" style="left:2041.50px;top:1105.72px;font-size:21px;line-height:27px;color:#1c1e21;">—</span>
<span class="t" style="left:1910.00px;top:1138.26px;font-size:18px;line-height:23px;color:#6a6d72;letter-spacing:-0.038px;">Beberapa Konversi</span>
<span class="t" style="left:2242.00px;top:1105.72px;font-size:21px;line-height:27px;color:#1c1e21;">—</span>
<span class="t" style="left:2110.50px;top:1138.26px;font-size:18px;line-height:23px;color:#6a6d72;letter-spacing:-0.038px;">Beberapa Konversi</span>
<span class="t" style="left:2320.86px;top:1105.72px;font-size:21px;line-height:27px;color:#1c1e21;letter-spacing:0.405px;">Rp 33.684.969</span>
<span class="t" style="left:2302.21px;top:1138.26px;font-size:18px;line-height:23px;color:#6a6d72;letter-spacing:0.186px;">Total Pembelanjaan</span>
<div style="position:absolute;left:498.5px;top:1212px;width:1831.5px;height:10px;background:#c1c1c1;border-radius:5px;"></div>
<div style="position:absolute;left:96px;top:386px;width:2386px;height:72px;background:#fff;border-top:1.5px solid #dcdfe3;box-shadow:0 4px 5px -2px rgba(0,0,0,0.18);"></div>
<div style="position:absolute;left:167.75px;top:386px;width:1.5px;height:72px;background:#dfe2e6;"></div>
<div style="position:absolute;left:249.75px;top:386px;width:1.5px;height:72px;background:#dfe2e6;"></div>
<div style="position:absolute;left:665.75px;top:386px;width:1.5px;height:72px;background:#dfe2e6;"></div>
<div style="position:absolute;left:866.75px;top:386px;width:1.5px;height:72px;background:#dfe2e6;"></div>
<div style="position:absolute;left:1067.25px;top:386px;width:1.5px;height:72px;background:#dfe2e6;"></div>
<div style="position:absolute;left:1267.75px;top:386px;width:1.5px;height:72px;background:#dfe2e6;"></div>
<div style="position:absolute;left:1468.25px;top:386px;width:1.5px;height:72px;background:#dfe2e6;"></div>
<div style="position:absolute;left:1669.25px;top:386px;width:1.5px;height:72px;background:#dfe2e6;"></div>
<div style="position:absolute;left:1869.75px;top:386px;width:1.5px;height:72px;background:#dfe2e6;"></div>
<div style="position:absolute;left:2070.25px;top:386px;width:1.5px;height:72px;background:#dfe2e6;"></div>
<div style="position:absolute;left:2270.75px;top:386px;width:1.5px;height:72px;background:#dfe2e6;"></div>
<div style="position:absolute;left:2471.75px;top:386px;width:1.5px;height:72px;background:#dfe2e6;"></div>
<div style="position:absolute;left:641.5px;top:386px;width:1.5px;height:72px;background:#d3d6da;"></div>
<div style="position:absolute;left:643px;top:386px;width:7px;height:72px;background:linear-gradient(90deg,rgba(0,0,0,0.07),rgba(0,0,0,0));"></div>
<div style="position:absolute;left:114px;top:405px;width:35.5px;height:35.5px;background:#fff;border:1.5px solid #d0d4d9;border-radius:6px;"></div>
<svg style="position:absolute;left:191px;top:413.9px;overflow:visible;" width="22" height="16.19999999999999" viewBox="0 0 22 17"><g fill="none" stroke="#1c2b33" stroke-width="2.0" stroke-linecap="round" stroke-linejoin="round"><path d="M5.5 15.5V1.8M1.3 6L5.5 1.6L9.7 6"/><path d="M16.5 1.5V15.2M12.3 11L16.5 15.4L20.7 11"/></g></svg>
<span class="t" style="left:267.50px;top:410.87px;font-size:20px;line-height:26px;color:#1c2b33;font-weight:700;letter-spacing:-0.093px;">Kampanye</span>
<svg style="position:absolute;left:377.5px;top:412.9px;overflow:visible;" width="22.0" height="16.19999999999999" viewBox="0 0 22 17"><g fill="none" stroke="#1c2b33" stroke-width="2.0" stroke-linecap="round" stroke-linejoin="round"><path d="M5.5 15.5V1.8M1.3 6L5.5 1.6L9.7 6"/><path d="M16.5 1.5V15.2M12.3 11L16.5 15.4L20.7 11"/></g></svg>
<svg style="position:absolute;left:616.75px;top:420.0px;" width="11.5" height="7.0" viewBox="0 0 11.5 7"><path d="M0.6 0.8 Q0 0 1 0 H10.5 Q11.5 0 10.9 0.8 L6.45 6.5 Q5.75 7 5.05 6.5 Z" fill="#1c2b33"/></svg>
<svg style="position:absolute;left:642.75px;top:420.0px;" width="11.5" height="7.0" viewBox="0 0 11.5 7"><path d="M0.6 0.8 Q0 0 1 0 H10.5 Q11.5 0 10.9 0.8 L6.45 6.5 Q5.75 7 5.05 6.5 Z" fill="#1c2b33"/></svg>
<span class="t" style="left:683.50px;top:410.87px;font-size:20px;line-height:26px;color:#1c2b33;font-weight:700;letter-spacing:-0.049px;">Anggaran</span>
<svg style="position:absolute;left:785px;top:412.9px;overflow:visible;" width="22" height="16.19999999999999" viewBox="0 0 22 17"><g fill="none" stroke="#1c2b33" stroke-width="2.0" stroke-linecap="round" stroke-linejoin="round"><path d="M5.5 15.5V1.8M1.3 6L5.5 1.6L9.7 6"/><path d="M16.5 1.5V15.2M12.3 11L16.5 15.4L20.7 11"/></g></svg>
<svg style="position:absolute;left:842.75px;top:420.0px;" width="11.5" height="7.0" viewBox="0 0 11.5 7"><path d="M0.6 0.8 Q0 0 1 0 H10.5 Q11.5 0 10.9 0.8 L6.45 6.5 Q5.75 7 5.05 6.5 Z" fill="#1c2b33"/></svg>
<span class="t" style="left:884.00px;top:410.87px;font-size:20px;line-height:26px;color:#1c2b33;font-weight:700;letter-spacing:0.190px;">Jangkauan</span>
<svg style="position:absolute;left:998px;top:412.9px;overflow:visible;" width="22" height="16.19999999999999" viewBox="0 0 22 17"><g fill="none" stroke="#1c2b33" stroke-width="2.0" stroke-linecap="round" stroke-linejoin="round"><path d="M5.5 15.5V1.8M1.3 6L5.5 1.6L9.7 6"/><path d="M16.5 1.5V15.2M12.3 11L16.5 15.4L20.7 11"/></g></svg>
<svg style="position:absolute;left:1043.75px;top:420.0px;" width="11.5" height="7.0" viewBox="0 0 11.5 7"><path d="M0.6 0.8 Q0 0 1 0 H10.5 Q11.5 0 10.9 0.8 L6.45 6.5 Q5.75 7 5.05 6.5 Z" fill="#1c2b33"/></svg>
<span class="t" style="left:1084.00px;top:410.87px;font-size:20px;line-height:26px;color:#1c2b33;font-weight:700;letter-spacing:0.226px;">Impresi</span>
<svg style="position:absolute;left:1164.5px;top:412.9px;overflow:visible;" width="22.0" height="16.19999999999999" viewBox="0 0 22 17"><g fill="none" stroke="#1c2b33" stroke-width="2.0" stroke-linecap="round" stroke-linejoin="round"><path d="M5.5 15.5V1.8M1.3 6L5.5 1.6L9.7 6"/><path d="M16.5 1.5V15.2M12.3 11L16.5 15.4L20.7 11"/></g></svg>
<svg style="position:absolute;left:1244.25px;top:420.0px;" width="11.5" height="7.0" viewBox="0 0 11.5 7"><path d="M0.6 0.8 Q0 0 1 0 H10.5 Q11.5 0 10.9 0.8 L6.45 6.5 Q5.75 7 5.05 6.5 Z" fill="#1c2b33"/></svg>
<span class="t" style="left:1285.00px;top:397.57px;font-size:20px;line-height:26px;color:#1c2b33;font-weight:700;letter-spacing:0.330px;">CPM (Biaya</span>
<span class="t" style="left:1285.00px;top:425.07px;font-size:20px;line-height:26px;color:#1c2b33;font-weight:700;letter-spacing:0.907px;">Per 1.000...</span>
<svg style="position:absolute;left:1408.5px;top:413.9px;overflow:visible;" width="22.0" height="16.19999999999999" viewBox="0 0 22 17"><g fill="none" stroke="#1c2b33" stroke-width="2.0" stroke-linecap="round" stroke-linejoin="round"><path d="M5.5 15.5V1.8M1.3 6L5.5 1.6L9.7 6"/><path d="M16.5 1.5V15.2M12.3 11L16.5 15.4L20.7 11"/></g></svg>
<svg style="position:absolute;left:1444.75px;top:420.5px;" width="11.5" height="7.0" viewBox="0 0 11.5 7"><path d="M0.6 0.8 Q0 0 1 0 H10.5 Q11.5 0 10.9 0.8 L6.45 6.5 Q5.75 7 5.05 6.5 Z" fill="#1c2b33"/></svg>
<span class="t" style="left:1485.50px;top:397.57px;font-size:20px;line-height:26px;color:#1c2b33;font-weight:700;letter-spacing:0.076px;">CPC (Biaya</span>
<span class="t" style="left:1485.50px;top:425.07px;font-size:20px;line-height:26px;color:#1c2b33;font-weight:700;letter-spacing:0.297px;">per Klik...</span>
<svg style="position:absolute;left:1609px;top:413.9px;overflow:visible;" width="22" height="16.19999999999999" viewBox="0 0 22 17"><g fill="none" stroke="#1c2b33" stroke-width="2.0" stroke-linecap="round" stroke-linejoin="round"><path d="M5.5 15.5V1.8M1.3 6L5.5 1.6L9.7 6"/><path d="M16.5 1.5V15.2M12.3 11L16.5 15.4L20.7 11"/></g></svg>
<svg style="position:absolute;left:1645.25px;top:420.5px;" width="11.5" height="7.0" viewBox="0 0 11.5 7"><path d="M0.6 0.8 Q0 0 1 0 H10.5 Q11.5 0 10.9 0.8 L6.45 6.5 Q5.75 7 5.05 6.5 Z" fill="#1c2b33"/></svg>
<span class="t" style="left:1686.50px;top:397.57px;font-size:20px;line-height:26px;color:#1c2b33;font-weight:700;letter-spacing:0.080px;">CTR (Rasio</span>
<span class="t" style="left:1686.50px;top:425.07px;font-size:20px;line-height:26px;color:#1c2b33;font-weight:700;letter-spacing:0.272px;">Klik Taya...</span>
<svg style="position:absolute;left:1810px;top:413.9px;overflow:visible;" width="22" height="16.19999999999999" viewBox="0 0 22 17"><g fill="none" stroke="#1c2b33" stroke-width="2.0" stroke-linecap="round" stroke-linejoin="round"><path d="M5.5 15.5V1.8M1.3 6L5.5 1.6L9.7 6"/><path d="M16.5 1.5V15.2M12.3 11L16.5 15.4L20.7 11"/></g></svg>
<svg style="position:absolute;left:1846.25px;top:420.5px;" width="11.5" height="7.0" viewBox="0 0 11.5 7"><path d="M0.6 0.8 Q0 0 1 0 H10.5 Q11.5 0 10.9 0.8 L6.45 6.5 Q5.75 7 5.05 6.5 Z" fill="#1c2b33"/></svg>
<span class="t" style="left:1899.50px;top:410.87px;font-size:20px;line-height:26px;color:#1c2b33;font-weight:700;letter-spacing:-0.326px;">Hasil</span>
<svg style="position:absolute;left:1953.5px;top:412.9px;overflow:visible;" width="22.0" height="16.19999999999999" viewBox="0 0 22 17"><g fill="none" stroke="#1c2b33" stroke-width="2.0" stroke-linecap="round" stroke-linejoin="round"><path d="M5.5 15.5V1.8M1.3 6L5.5 1.6L9.7 6"/><path d="M16.5 1.5V15.2M12.3 11L16.5 15.4L20.7 11"/></g></svg>
<svg style="position:absolute;left:2046.75px;top:420.0px;" width="11.5" height="7.0" viewBox="0 0 11.5 7"><path d="M0.6 0.8 Q0 0 1 0 H10.5 Q11.5 0 10.9 0.8 L6.45 6.5 Q5.75 7 5.05 6.5 Z" fill="#1c2b33"/></svg>
<span class="t" style="left:2087.50px;top:397.57px;font-size:20px;line-height:26px;color:#1c2b33;font-weight:700;letter-spacing:-0.069px;">Biaya per</span>
<span class="t" style="left:2087.50px;top:425.07px;font-size:20px;line-height:26px;color:#1c2b33;font-weight:700;letter-spacing:-0.519px;">hasil</span>
<svg style="position:absolute;left:2210.5px;top:413.9px;overflow:visible;" width="22.0" height="16.19999999999999" viewBox="0 0 22 17"><g fill="none" stroke="#1c2b33" stroke-width="2.0" stroke-linecap="round" stroke-linejoin="round"><path d="M5.5 15.5V1.8M1.3 6L5.5 1.6L9.7 6"/><path d="M16.5 1.5V15.2M12.3 11L16.5 15.4L20.7 11"/></g></svg>
<svg style="position:absolute;left:2247.25px;top:420.5px;" width="11.5" height="7.0" viewBox="0 0 11.5 7"><path d="M0.6 0.8 Q0 0 1 0 H10.5 Q11.5 0 10.9 0.8 L6.45 6.5 Q5.75 7 5.05 6.5 Z" fill="#1c2b33"/></svg>
<span class="t" style="left:2288.00px;top:397.57px;font-size:20px;line-height:26px;color:#1c2b33;font-weight:700;letter-spacing:0.196px;">Jumlah</span>
<span class="t" style="left:2288.00px;top:425.07px;font-size:20px;line-height:26px;color:#1c2b33;font-weight:700;letter-spacing:0.442px;">yang...</span>
<svg style="position:absolute;left:2411px;top:413.9px;overflow:visible;" width="22" height="16.19999999999999" viewBox="0 0 22 17"><g fill="none" stroke="#1c2b33" stroke-width="2.0" stroke-linecap="round" stroke-linejoin="round"><path d="M5.5 15.5V1.8M1.3 6L5.5 1.6L9.7 6"/><path d="M16.5 1.5V15.2M12.3 11L16.5 15.4L20.7 11"/></g></svg>
<svg style="position:absolute;left:2447.75px;top:420.5px;" width="11.5" height="7.0" viewBox="0 0 11.5 7"><path d="M0.6 0.8 Q0 0 1 0 H10.5 Q11.5 0 10.9 0.8 L6.45 6.5 Q5.75 7 5.05 6.5 Z" fill="#1c2b33"/></svg>
<svg style="position:absolute;left:21px;top:29.3px;overflow:visible;" width="42.3" height="27.999999999999996" viewBox="0 0 42.3 27.999999999999996" fill="none" stroke="#1c2b33" stroke-width="4.6" stroke-linecap="round" stroke-linejoin="round"><defs><linearGradient id="mg" x1="0" y1="0" x2="1" y2="0"><stop offset="0" stop-color="#2c7be8"/><stop offset="0.5" stop-color="#2b63d4"/><stop offset="1" stop-color="#2d74e2"/></linearGradient></defs><path d="M21.2 9.5 C17.5 4.5 14.5 2.4 11 2.4 C5.5 2.4 2.3 9.5 2.3 16.8 C2.3 22.2 4.6 25.6 8.6 25.6 C12.6 25.6 15 22 18.5 16 L23.8 7.6 C26.5 3.8 28.8 2.4 31.6 2.4 C36.8 2.4 40 9 40 16.6 C40 22.2 37.8 25.6 33.8 25.6 C30 25.6 27.6 22.6 24.4 17.2 Z" stroke="url(#mg)"/></svg>
<svg style="position:absolute;left:23px;top:119px;overflow:visible;" width="40" height="40" viewBox="0 0 40 40" fill="none" stroke="#1c2b33" stroke-width="2.3" stroke-linecap="round" stroke-linejoin="round"><g transform="translate(20.1 20.3) rotate(-12)"><path d="M0 -14 C-7.5 -14 -9.6 -8 -9.6 -2 C-9.6 3 -11.5 5.5 -14 8 C-15 9.2 -14.4 10.6 -12.8 10.6 H12.8 C14.4 10.6 15 9.2 14 8 C11.5 5.5 9.6 3 9.6 -2 C9.6 -8 7.5 -14 0 -14Z"/><path d="M-3.2 -14.4 A3.3 3.3 0 0 1 3.2 -14.4"/><path d="M-4.6 11 A4.6 4.6 0 0 0 4.6 11"/></g></svg>
<svg style="position:absolute;left:24px;top:231px;overflow:visible;" width="36" height="36" viewBox="0 0 36 36" fill="none" stroke="#1c2b33" stroke-width="2.3" stroke-linecap="round" stroke-linejoin="round"><circle cx="17.8" cy="18" r="16"/><path d="M2.6 23.6 H33"/><path d="M17.6 17.6 L21.6 13.4" stroke-width="2.6"/><g fill="#1c2b33" stroke="none"><circle cx="17.8" cy="7.6" r="1.5"/><circle cx="10.4" cy="10.8" r="1.5"/><circle cx="25.2" cy="10.8" r="1.5"/><circle cx="6.8" cy="18" r="1.5"/><circle cx="28.8" cy="18" r="1.5"/></g></svg>
<div style="position:absolute;left:24.8px;top:295.9px;width:34.099999999999994px;height:5.0px;background:#3575bd;border-radius:1px;"></div>
<div style="position:absolute;left:24.8px;top:304.2px;width:9.2px;height:3.8999999999999773px;background:#3575bd;border-radius:1px;"></div>
<div style="position:absolute;left:37.6px;top:304.2px;width:8.399999999999999px;height:3.8999999999999773px;background:#3575bd;border-radius:1px;"></div>
<div style="position:absolute;left:49.6px;top:304.2px;width:9.299999999999997px;height:3.8999999999999773px;background:#3575bd;border-radius:1px;"></div>
<div style="position:absolute;left:24.8px;top:311.7px;width:9.2px;height:3.8999999999999773px;background:#3575bd;border-radius:1px;"></div>
<div style="position:absolute;left:37.6px;top:311.7px;width:8.399999999999999px;height:3.8999999999999773px;background:#3575bd;border-radius:1px;"></div>
<div style="position:absolute;left:49.6px;top:311.7px;width:9.299999999999997px;height:3.8999999999999773px;background:#3575bd;border-radius:1px;"></div>
<div style="position:absolute;left:24.8px;top:319.3px;width:9.2px;height:3.8999999999999773px;background:#3575bd;border-radius:1px;"></div>
<div style="position:absolute;left:37.6px;top:319.3px;width:8.399999999999999px;height:3.8999999999999773px;background:#3575bd;border-radius:1px;"></div>
<div style="position:absolute;left:49.6px;top:319.3px;width:9.299999999999997px;height:3.8999999999999773px;background:#3575bd;border-radius:1px;"></div>
<svg style="position:absolute;left:24px;top:351px;overflow:visible;" width="36" height="36" viewBox="0 0 36 36" fill="none" stroke="#1c2b33" stroke-width="2.2" stroke-linecap="round" stroke-linejoin="round"><path d="M24.8 6.4 L33.8 8.2 Q35.3 8.5 35 10 L30.8 33.4 Q30.5 34.9 29 34.6 L9.6 30.9 Q8.4 30.6 8.6 29.4 L8.8 28.2"/><path d="M25.6 14.2 L28.6 14.8 M25 19.2 L27.6 19.7"/><rect x="1.3" y="1.3" width="23.4" height="26.8" rx="2.2" fill="#fff"/><path d="M5.8 1.6 V27.8"/><path d="M11 8.2 H20 M11 13.2 H20"/></svg>
<svg style="position:absolute;left:24px;top:415px;overflow:visible;" width="36" height="28" viewBox="0 0 36 28" fill="none" stroke="#1c2b33" stroke-width="2.2" stroke-linecap="round" stroke-linejoin="round"><circle cx="18" cy="6.6" r="4.6"/><circle cx="6.6" cy="8.6" r="3.3"/><circle cx="29.4" cy="8.6" r="3.3"/><path d="M9.4 22.2 C9.4 17.4 13 14.8 18 14.8 C23 14.8 26.6 17.4 26.6 22.2 C26.6 24.6 24.6 25.8 22.6 25.8 H13.4 C11.4 25.8 9.4 24.6 9.4 22.2Z"/><path d="M9 15.6 C4.6 15 1.2 17.4 1.2 20.4 C1.2 22.4 2.6 23.2 4.4 23.2 H9"/><path d="M27 15.6 C31.4 15 34.8 17.4 34.8 20.4 C34.8 22.4 33.4 23.2 31.6 23.2 H27"/></svg>
<svg style="position:absolute;left:24px;top:476px;overflow:visible;" width="36" height="26" viewBox="0 0 36 26" fill="none" stroke="#1c2b33" stroke-width="2.3" stroke-linecap="round" stroke-linejoin="round"><rect x="1.3" y="1.3" width="33.6" height="22.8" rx="4.2"/><path d="M1.5 8.6 H34.5" stroke-width="4.2" stroke-linecap="butt"/><path d="M5.6 18.8 H11.2 M15.2 18.8 H25.6" stroke-width="2"/></svg>
<svg style="position:absolute;left:25px;top:532px;overflow:visible;" width="34" height="31" viewBox="0 0 34 31" fill="none" stroke="#1c2b33" stroke-width="2.2" stroke-linecap="round" stroke-linejoin="round"><path d="M31.5 16 V2.6 Q31.5 1.4 30.2 1.8 C24 4.2 21 8.4 15 8.4 H6.2 C3.4 8.4 1.6 10.6 1.6 13.2 C1.6 15.8 3.4 18 6.2 18 H18"/><path d="M7.6 8.6 V18"/><path d="M8.8 18.4 L10 28.2 Q10.2 29.2 11.2 29.2 H14 Q15 29.2 15 28.2 V18.4"/><g transform="translate(26.8 24.6)"><circle r="3.6" fill="#1c2b33" stroke="none"/><path d="M0 -6.2V6.2 M5.37 -3.1L-5.37 3.1 M5.37 3.1L-5.37 -3.1" stroke-width="3" stroke-linecap="butt"/><circle r="1.7" fill="#fff" stroke="none"/></g></svg>
<svg style="position:absolute;left:22px;top:588px;overflow:visible;" width="40" height="40" viewBox="0 0 40 40" fill="none" stroke="#1c2b33" stroke-width="2.2" stroke-linecap="round" stroke-linejoin="round"><circle cx="19.9" cy="12.5" r="9.3"/><circle cx="7" cy="27.9" r="3.7"/><circle cx="19.9" cy="33.2" r="3.7"/><circle cx="32.7" cy="27.9" r="3.7"/><path d="M19.9 22 V29.2 M13.6 19.8 L9.6 24.8 M26.2 19.8 L30.2 24.8"/></svg>
<svg style="position:absolute;left:28px;top:658px;overflow:visible;" width="28" height="28" viewBox="0 0 28 28" fill="none" stroke="#1c2b33" stroke-width="2.3" stroke-linecap="round" stroke-linejoin="round"><path d="M1.2 3.3 H26.8 M1.2 13.8 H26.8 M1.2 24.3 H26.8"/></svg>
<span class="t" style="left:33.74px;top:957.95px;font-size:29px;line-height:38px;color:#2a6a5f;">?</span>
<svg style="position:absolute;left:27px;top:1023px;overflow:visible;" width="31" height="29" viewBox="0 0 31 29" fill="none" stroke="#1c2b33" stroke-width="2.1" stroke-linecap="round" stroke-linejoin="round"><rect x="7.6" y="1.3" width="22" height="26" rx="2.6"/><path d="M7.6 5 Q3.4 5.6 3 9 L1.4 23.4 Q1.2 27.2 5 27.3 H10"/><path d="M5.8 7.5 L4.4 23.6"/><circle cx="16.6" cy="9.6" r="3.4" fill="#1c2b33" stroke="none"/><path d="M12 17.4 H25.4 M12 22.2 H25.4"/></svg>
<svg style="position:absolute;left:26px;top:1076px;overflow:visible;" width="32" height="32" viewBox="0 0 32 32" fill="none" stroke="#1c2b33" stroke-width="2.2" stroke-linecap="round" stroke-linejoin="round"><path d="M13.55 1.28 L18.05 1.28 L18.32 5.00 L21.44 6.29 L24.26 3.85 L27.45 7.04 L25.01 9.86 L26.30 12.98 L30.02 13.25 L30.02 17.75 L26.30 18.02 L25.01 21.14 L27.45 23.96 L24.26 27.15 L21.44 24.71 L18.32 26.00 L18.05 29.72 L13.55 29.72 L13.28 26.00 L10.16 24.71 L7.34 27.15 L4.15 23.96 L6.59 21.14 L5.30 18.02 L1.58 17.75 L1.58 13.25 L5.30 12.98 L6.59 9.86 L4.15 7.04 L7.34 3.85 L10.16 6.29 L13.28 5.00Z"/><circle cx="15.8" cy="15.5" r="4.8"/></svg>
<svg style="position:absolute;left:27px;top:1130px;overflow:visible;" width="31" height="31" viewBox="0 0 31 31" fill="none" stroke="#1c2b33" stroke-width="2.3" stroke-linecap="round" stroke-linejoin="round"><circle cx="12.2" cy="12.3" r="10"/><path d="M19.6 19.8 L28.4 28.6" stroke-width="2.8"/></svg>
<svg style="position:absolute;left:27px;top:1184px;overflow:visible;" width="30" height="31" viewBox="0 0 30 31" fill="none" stroke="#1c2b33" stroke-width="2.1" stroke-linecap="round" stroke-linejoin="round"><ellipse cx="15" cy="18.4" rx="7.6" ry="10.6"/><path d="M8 13.4 H22 M15 13.6 V28.6"/><path d="M9.6 7.4 C10.6 3.6 19.4 3.6 20.4 7.4" /><path d="M6 2.6 L9.8 5.6 M24 2.6 L20.2 5.6"/><path d="M7.6 15.4 L3.6 13.6 L2.4 10.6 M22.4 15.4 L26.4 13.6 L27.6 10.6 M7.4 20 H2 M22.6 20 H28 M8.4 24.6 L4 26.4 L3.4 29.4 M21.6 24.6 L26 26.4 L26.6 29.4"/></svg>
<svg style="position:absolute;left:2515px;top:20px;overflow:visible;" width="25" height="23" viewBox="0 0 25 23" fill="none" stroke="#ffffff" stroke-width="1.5" stroke-linecap="round" stroke-linejoin="round"><rect x="1.6" y="15.4" width="3.6" height="6.2" rx="0.8"/><rect x="7.8" y="7.6" width="3.8" height="14" rx="0.8"/><rect x="13.8" y="9.6" width="3.8" height="12" rx="0.8"/><rect x="19.8" y="1.6" width="3.8" height="20" rx="0.8"/></svg>
<svg style="position:absolute;left:2515px;top:85px;overflow:visible;" width="25" height="24" viewBox="0 0 25 24" fill="none" stroke="#a7b2b9" stroke-width="1.6" stroke-linecap="round" stroke-linejoin="round"><path d="M16.6 2.2 L22 7.4 L7.2 22 L1.8 22.4 L1.8 17 Z M13.6 5.4 L18.8 10.6"/></svg>
<svg style="position:absolute;left:2514px;top:150px;overflow:visible;" width="27" height="27" viewBox="0 0 27 27" fill="none" stroke="#a7b2b9" stroke-width="1.6" stroke-linecap="round" stroke-linejoin="round"><circle cx="13.2" cy="13" r="11.6"/><path d="M13.2 7.2 V13.6 L16.6 16.6"/></svg>
<svg style="position:absolute;left:341px;top:36px;overflow:visible;" width="23" height="20" viewBox="0 0 23 20" fill="none" stroke="#1c2b33" stroke-width="2.2" stroke-linecap="round" stroke-linejoin="round"><rect x="1.6" y="2.4" width="12.6" height="14.6" rx="2" stroke-width="2.4"/><rect x="4.2" y="9.6" width="7.4" height="4.8" fill="#1c2b33" stroke="none"/><path d="M17.6 3.6 H21.6 M17.6 9.7 H21.6 M17.6 15.8 H21.6" stroke-width="2.2" stroke-linecap="butt"/></svg>
<svg style="position:absolute;left:1787px;top:31px;overflow:visible;" width="25" height="25" viewBox="0 0 25 25" fill="none" stroke="#1c2b33" stroke-width="2.9" stroke-linecap="round" stroke-linejoin="round"><path d="M3.2 10.2 A9.6 9.6 0 0 1 20 6.4" stroke-width="2.9"/><path d="M21.6 14.6 A9.6 9.6 0 0 1 4.8 18.4" stroke-width="2.9"/><path d="M21.8 3.4 V9.2 H16.2 Z M3 21.4 V15.6 H8.6 Z" fill="#1c2b33" stroke-width="1.6"/></svg>
<svg style="position:absolute;left:1860px;top:29.3px;overflow:visible;" width="23" height="25.499999999999996" viewBox="0 0 23 25.499999999999996" fill="none" stroke="#1c2b33" stroke-width="2" stroke-linecap="round" stroke-linejoin="round"><path d="M1.6 6.2 H21.2" stroke-width="2.2"/><path d="M7.4 5.4 C8 2 14.8 2 15.4 5.4 Z" fill="#1c2b33" stroke-width="1"/><path d="M2.8 9 H20 L18.6 23 Q18.4 24.6 16.8 24.6 H6 Q4.4 24.6 4.2 23 Z" fill="#1c2b33" stroke-width="1"/><path d="M7.6 11.4 L8.3 21.6 M11.4 11.4 V21.6 M15.2 11.4 L14.5 21.6" stroke="#eef1f6" stroke-width="1.5"/></svg>
<svg style="position:absolute;left:127px;top:120.5px;overflow:visible;" width="24.5" height="21.0" viewBox="0 0 24.5 21.0" fill="none" stroke="#1c2b33" stroke-width="0" stroke-linecap="round" stroke-linejoin="round"><path d="M0.6 3 Q0.6 0.6 3 0.6 H8.6 Q10 0.6 10.8 1.8 L12 3.6 H21.4 Q23.8 3.6 23.8 6 V18 Q23.8 20.4 21.4 20.4 H3 Q0.6 20.4 0.6 18 Z" fill="#3578c2" stroke="none"/></svg>
<svg style="position:absolute;left:331px;top:119px;overflow:visible;" width="25" height="24" viewBox="0 0 25 24" fill="none" stroke="#2a363d" stroke-width="1.7" stroke-linecap="round" stroke-linejoin="round"><path d="M1.6 9.6 L12.4 1.8 L23.2 9.6 V20.4 Q23.2 22 21.6 22 H3.2 Q1.6 22 1.6 20.4 Z"/><path d="M1.8 10 L12.4 16.6 L23 10"/><path d="M2.4 21.4 L9.6 14.8 M22.4 21.4 L15.2 14.8"/></svg>
<svg style="position:absolute;left:549px;top:119px;overflow:visible;" width="25" height="24" viewBox="0 0 25 24" fill="none" stroke="#2a363d" stroke-width="1.7" stroke-linecap="round" stroke-linejoin="round"><path d="M2.4 1.8 L23 12 L2.4 22.4 Q1.4 22.8 1.8 21.6 L5.2 12 L1.8 2.6 Q1.4 1.4 2.4 1.8Z"/><path d="M5.4 12 H22"/></svg>
<svg style="position:absolute;left:731px;top:119px;overflow:visible;" width="26" height="26" viewBox="0 0 26 26" fill="none" stroke="#1c2b33" stroke-width="2.3" stroke-linecap="round" stroke-linejoin="round"><path d="M4.67 19.15 A10.9 10.9 0 1 1 21.13 19.15"/><path d="M12.90 19.6 V6.8 M8.50 11.2 L12.90 6.6 L17.30 11.2"/></svg>
<svg style="position:absolute;left:906px;top:124px;overflow:visible;" width="18" height="18" viewBox="0 0 18 18" fill="none" stroke="#1c2b33" stroke-width="2.2" stroke-linecap="round" stroke-linejoin="round"><path d="M9 1.2 V16.8 M1.2 9 H16.8"/></svg>
<svg style="position:absolute;left:2427px;top:121px;overflow:visible;" width="26" height="23" viewBox="0 0 26 23" fill="none" stroke="#1c2b33" stroke-width="1.7" stroke-linecap="round" stroke-linejoin="round"><path d="M1.4 6.2 H5.4 M13.6 6.2 H24.6 M1.4 16.8 H13 M21.2 16.8 H24.6"/><circle cx="9.5" cy="6.2" r="3.3"/><circle cx="17" cy="16.8" r="3.3"/></svg>
<svg style="position:absolute;left:127px;top:259px;overflow:visible;" width="33.5" height="31" viewBox="0 0 33.5 31" fill="none" stroke="#1c2b33" stroke-width="0" stroke-linecap="round" stroke-linejoin="round"><path d="M0.6 3.4 Q0.6 0.6 3.4 0.6 H11 Q12.6 0.6 13.4 2 L15 4.6 H30 Q32.8 4.6 32.8 7.4 V27.4 Q32.8 30.2 30 30.2 H3.4 Q0.6 30.2 0.6 27.4 Z" fill="#3578c2" stroke="none"/><path d="M16.7 13.4 L22 23.6 L16.7 21 L11.4 23.6 Z" fill="#fff" stroke="none"/></svg>
<svg style="position:absolute;left:505px;top:264px;overflow:visible;" width="28" height="28" viewBox="0 0 28 28" fill="none" stroke="#1c2b33" stroke-width="2.3" stroke-linecap="round" stroke-linejoin="round"><rect x="1.3" y="1.3" width="10.4" height="10.4" rx="2"/><rect x="16" y="1.3" width="10.4" height="10.4" rx="2"/><rect x="1.3" y="16" width="10.4" height="10.4" rx="2"/><rect x="16" y="16" width="10.4" height="10.4" rx="2"/><circle cx="6.5" cy="6.5" r="2.2" fill="#1c2b33" stroke="none"/><circle cx="21.2" cy="21.2" r="2.2" fill="#1c2b33" stroke="none"/></svg>
<svg style="position:absolute;left:883.5px;top:264.5px;overflow:visible;" width="27.5" height="27.5" viewBox="0 0 27.5 27.5" fill="none" stroke="#1c2b33" stroke-width="2.2" stroke-linecap="round" stroke-linejoin="round"><rect x="1.3" y="1.3" width="24.2" height="24.2" rx="3"/><path d="M10 6.6 H21" stroke-width="2"/><circle cx="5.9" cy="6.6" r="1.3" fill="#1c2b33" stroke="none"/></svg>
<svg style="position:absolute;left:2021px;top:257px;overflow:visible;" width="24" height="24" viewBox="0 0 24 24" fill="none" stroke="#1c2b33" stroke-width="1.9" stroke-linecap="round" stroke-linejoin="round"><rect x="1.2" y="1.2" width="21.4" height="21.2" rx="4.6"/><path d="M1.6 8 H22.2 M1.6 15 H22.2 M8.4 8 V22 M15.4 8 V22" stroke-width="1.6"/><path d="M8 4.6 H16" stroke-width="1.5"/></svg>
<svg style="position:absolute;left:129px;top:338px;overflow:visible;" width="19" height="19" viewBox="0 0 19 19" fill="none" stroke="#fff" stroke-width="2.4" stroke-linecap="round" stroke-linejoin="round"><path d="M9.5 1.4 V17.6 M1.4 9.5 H17.6"/></svg>
<svg style="position:absolute;left:261.5px;top:334px;overflow:visible;" width="25.0" height="25" viewBox="0 0 25.0 25" fill="none" stroke="#1c2b33" stroke-width="0" stroke-linecap="round" stroke-linejoin="round"><path d="M9.6 0.6 H17 L24 7.6 V19 Q24 21.2 21.8 21.2 H9.6 Q7.4 21.2 7.4 19 V2.8 Q7.4 0.6 9.6 0.6Z" fill="#7d8084" stroke="none"/><path d="M17.6 0.4 V7 H24.4" fill="#fff" stroke="#fff" stroke-width="1.4"/><path d="M17.2 1.6 L23 7.4" stroke="#7d8084" stroke-width="0"/><path d="M4.6 3.4 L1.8 4 Q0.8 4.2 1 5.2 L3.6 22.6 Q3.8 23.6 4.8 23.4 L7.2 23" stroke="#7d8084" stroke-width="1.7" fill="none"/></svg>
<svg style="position:absolute;left:279px;top:334.6px" width="8" height="8" viewBox="0 0 8 8"><path d="M1 0.2 L6.8 6 H2 Q1 6 1 5 Z" fill="#7d8084"/></svg>
<svg style="position:absolute;left:493.5px;top:335px;overflow:visible;" width="23.0" height="22.5" viewBox="0 0 23.0 22.5" fill="none" stroke="#1c2b33" stroke-width="0" stroke-linecap="round" stroke-linejoin="round"><path d="M15.4 2.2 Q16.6 1 17.8 2.2 L20.6 5 Q21.8 6.2 20.6 7.4 L19 9 L13.8 3.8 Z M12.4 5.2 L17.6 10.4 L6.4 21.6 L1.6 22.2 Q0.8 22.2 1 21.2 L1.4 16.4 Z" fill="#7d8084" stroke="none"/></svg>
<svg style="position:absolute;left:694.5px;top:334.5px;overflow:visible;" width="23.5" height="24.0" viewBox="0 0 23.5 24.0" fill="none" stroke="#1c2b33" stroke-width="2" stroke-linecap="round" stroke-linejoin="round"><path d="M8.4 1.6 H15" stroke-width="2.2"/><path d="M9.6 2 V9 L2.2 19.6 Q0.8 22.6 4 22.8 H19.4 Q22.6 22.6 21.2 19.6 L13.8 9 V2" stroke-width="2.1" fill="none"/><path d="M6.4 15.6 H17 L20.4 20.4 Q21.2 22 19.4 22 H4 Q2.2 22 3 20.4 Z" fill="#1c2b33" stroke="#1c2b33" stroke-width="1.2"/></svg>
<div style="position:absolute;left:1334px;top:337px;width:6.5px;height:19.19999999999999px;background:#222c33;border-radius:0.8px;"></div>
<div style="position:absolute;left:1343px;top:337px;width:5.7999999999999545px;height:19.19999999999999px;background:#222c33;border-radius:0.8px;"></div>
<div style="position:absolute;left:1351.3px;top:337px;width:6.600000000000136px;height:19.19999999999999px;background:#222c33;border-radius:0.8px;"></div>
<div style="position:absolute;left:1692.3px;top:336.2px;width:20.90000000000009px;height:5.400000000000034px;background:#222c33;"></div>
<div style="position:absolute;left:1700px;top:343.9px;width:13.200000000000045px;height:5.300000000000011px;background:#222c33;"></div>
<div style="position:absolute;left:1700px;top:351.5px;width:13.200000000000045px;height:5.399999999999977px;background:#222c33;"></div>
<svg style="position:absolute;left:1900.5px;top:337px;overflow:visible;" width="25.5" height="22" viewBox="0 0 25.5 22" fill="none" stroke="#1c2b33" stroke-width="0" stroke-linecap="round" stroke-linejoin="round"><path d="M10 20 L20.4 21.4 Q21.4 21.5 21.6 20.5 L24 6.4 Q24.2 5.4 23.2 5.2 L19 4.4 Z" fill="#222c33" stroke="#222c33" stroke-width="1"/><rect x="3.2" y="0.8" width="14.6" height="17.4" rx="1.6" fill="#222c33" stroke="#fff" stroke-width="0.8"/><path d="M1.4 1.6 V17.4" stroke="#222c33" stroke-width="1.8"/><path d="M8 5.2 H14.6 M8 8.6 H14.6" stroke="#fff" stroke-width="1.5" stroke-linecap="butt"/></svg>
<svg style="position:absolute;left:2101px;top:335.5px;overflow:visible;" width="23" height="22.0" viewBox="0 0 23 22.0" fill="none" stroke="#1c2b33" stroke-width="2.3" stroke-linecap="round" stroke-linejoin="round"><path d="M9.4 3 H5 Q1.8 3 1.8 6.2 V17 Q1.8 20.2 5 20.2 H16.4 Q19.6 20.2 19.6 17 V13"/><path d="M10.6 11.4 L20 2 M13.6 1.6 H20.4 V8.4" stroke-width="2.2"/></svg>
<svg style="position:absolute;left:2315.5px;top:334.5px;overflow:visible;" width="25.5" height="24.5" viewBox="0 0 25.5 24.5" fill="none" stroke="#1c2b33" stroke-width="1.6" stroke-linecap="round" stroke-linejoin="round"><rect x="1.2" y="1.2" width="22.6" height="22" rx="2.6"/><path d="M1.6 19.4 L9.2 12.8 L12.2 15.2 L19.4 7.4 M14.4 7 H19.6 V12.2" stroke-width="1.5"/></svg>
<div style="position:absolute;left:497.5px;top:1110.5px;width:17.0px;height:17.0px;background:#2b3238;border-radius:50%;"></div>
<span class="t" style="left:504.05px;top:1111.15px;font-size:14px;line-height:18px;color:#fff;font-weight:700;font-family:"Liberation Serif",serif;">i</span>
</div></body></html>
